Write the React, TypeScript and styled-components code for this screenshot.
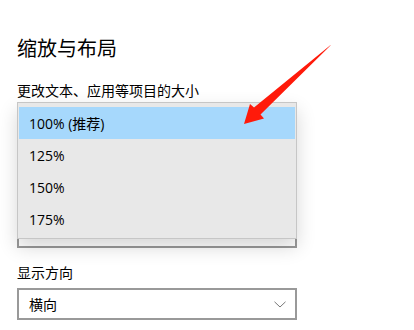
import React from "react";
import styled, { createGlobalStyle } from "styled-components";

const GlobalStyle = createGlobalStyle`
  html, body {
    margin: 0;
    padding: 0;
    background: #ffffff;
  }
  body {
    font-family: "Open Sans", "Noto Sans CJK SC", sans-serif;
    color: #000000;
  }
`;

const Page = styled.div`
  position: relative;
  width: 414px;
  height: 330px;
  overflow: hidden;
  padding: 34px 0 0 17px;
  box-sizing: border-box;
  display: flex;
  flex-direction: column;
`;

const Title = styled.h1`
  margin: 0;
  font-family: "Noto Sans CJK SC", sans-serif;
  font-size: 20px;
  font-weight: 400;
  line-height: 28px;
`;

const Label = styled.div<{ $top: number }>`
  margin-top: ${(p) => p.$top}px;
  font-family: "Noto Sans CJK SC", sans-serif;
  font-size: 14px;
  line-height: 20px;
`;

const ComboBox = styled.div<{ $top: number }>`
  margin-top: ${(p) => p.$top}px;
  width: 280px;
  height: 32px;
  box-sizing: border-box;
  border: 2px solid #999999;
  background: #ffffff;
  display: flex;
  align-items: center;
  justify-content: space-between;
  padding: 0 9px 0 10px;
  font-family: "Noto Sans CJK SC", sans-serif;
  font-size: 14px;
`;

const Popup = styled.ul`
  position: absolute;
  top: 102px;
  left: 17px;
  width: 280px;
  box-sizing: border-box;
  margin: 0;
  padding: 4px 1px 3px;
  list-style: none;
  background: #e8e8e8;
  border: 1px solid #c6c6c6;
  box-shadow: 0 8px 18px rgba(0, 0, 0, 0.16);
`;

const Option = styled.li<{ $selected?: boolean }>`
  height: 32px;
  display: flex;
  align-items: center;
  padding-left: 10px;
  font-size: 14px;
  background: ${(p) => (p.$selected ? "#a6d8fc" : "transparent")};
`;

const ArrowMark = styled.svg`
  position: absolute;
  left: 0;
  top: 0;
  pointer-events: none;
`;

const Chevron = () => (
  <svg width="12" height="7" viewBox="0 0 12 7">
    <path d="M0.5 0.8 L6 6 L11.5 0.8" fill="none" stroke="#777" strokeWidth="1" />
  </svg>
);

const options = ["100% (推荐)", "125%", "150%", "175%"];

export default function App() {
  return (
    <>
      <GlobalStyle />
      <Page>
        <Title>缩放与布局</Title>
        <Label $top={18}>更改文本、应用等项目的大小</Label>
        {/* combo box lying under the open list; only its bottom edge shows */}
        <ComboBox $top={116} />
        <Label $top={14}>显示方向</Label>
        <ComboBox $top={6}>
          横向
          <Chevron />
        </ComboBox>

        <Popup>
          {options.map((o, i) => (
            <Option key={o} $selected={i === 0}>
              {o}
            </Option>
          ))}
        </Popup>

        <ArrowMark width="414" height="330" viewBox="0 0 414 330">
          <polygon
            points="331,45 260.5,114.5 264,118.5 244,124 250,104 254,107.5 330,45.5"
            fill="#ff1a0a"
          />
        </ArrowMark>
      </Page>
    </>
  );
}
